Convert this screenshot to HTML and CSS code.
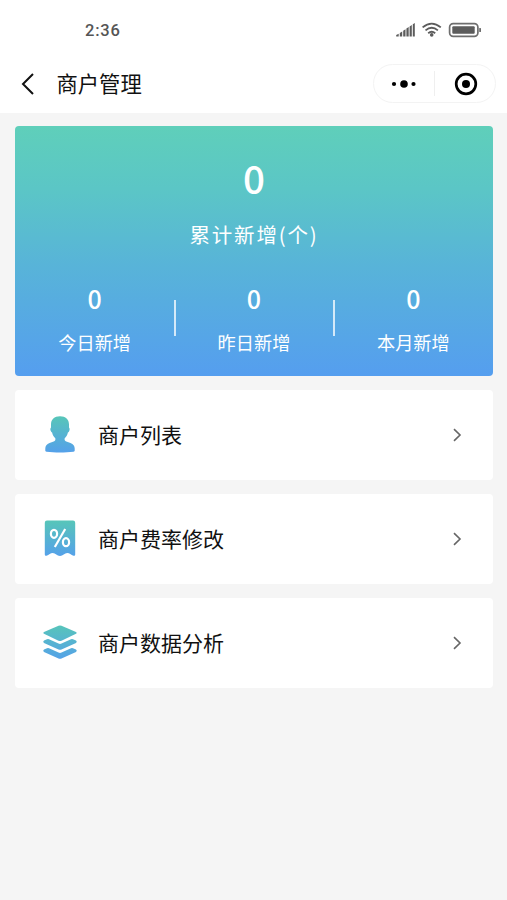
FILE: index.html
```html
<!DOCTYPE html>
<html lang="zh-CN">
<head>
    <meta charset="UTF-8">
    <title>商户管理</title>
    <link rel="stylesheet" href="styles.css">
</head>
<body>
    <header class="header">
        <div class="status-bar">
            <span class="time">2:36</span>
            <svg class="status-icons" width="88" height="16" viewBox="0 0 88 16">
                <g fill="#5c5c5c">
                    <path d="M1.2 14.500v-1.500l2.500-1.200v2.700zM4.800 14.500v-3.500l2.400-1.400v4.900zM8.200 14.500V8.800l2.300-1.500v7.200zM11.400 14.500V6.600l2.300-1.500v9.400zM14.600 14.500V4.400l2.200-1.500v11.600zM17.800 14.500V2.200l2-1.300v13.600z"/>
                    <circle cx="36.7" cy="12.9" r="1.8"/>
                    <rect x="57.3" y="4.3" width="22.4" height="7.4" rx="1"/>
                    <rect x="84.3" y="6" width="1.6" height="4" rx=".6"/>
                </g>
                <path d="M27.6 5.4Q36.7-2.2 45.8 5.4M30.5 8.4Q36.7 3.2 42.9 8.4M33.2 11.2Q36.7 8.2 40.2 11.2" fill="none" stroke="#5c5c5c" stroke-width="1.8"/>
                <rect x="54.6" y="1.6" width="28.3" height="12.8" rx="3.6" fill="none" stroke="#6e6e6e" stroke-width="1.7"/>
            </svg>
        </div>
        <div class="nav-bar">
            <svg class="back" width="14" height="22" viewBox="0 0 14 22">
                <path d="M12 1L2 11l10 10" fill="none" stroke="#111" stroke-width="2"/>
            </svg>
            <h1 class="title">商户管理</h1>
            <div class="capsule">
                <svg width="26" height="10" viewBox="0 0 26 10">
                    <circle cx="3" cy="5" r="2.1"/>
                    <circle cx="13" cy="5" r="3.8"/>
                    <circle cx="22.5" cy="5" r="2.1"/>
                </svg>
                <span class="capsule-line"></span>
                <svg width="24" height="24" viewBox="0 0 24 24">
                    <circle cx="12" cy="12" r="9.8" fill="none" stroke="#000" stroke-width="2.7"/>
                    <circle cx="12" cy="12" r="4"/>
                </svg>
            </div>
        </div>
    </header>

    <main class="content">
        <section class="summary">
            <div class="total">0</div>
            <div class="total-label">累计新增(个)</div>
            <div class="stats">
                <div class="stat">
                    <div class="stat-num">0</div>
                    <div class="stat-label">今日新增</div>
                </div>
                <span class="divider"></span>
                <div class="stat">
                    <div class="stat-num">0</div>
                    <div class="stat-label">昨日新增</div>
                </div>
                <span class="divider"></span>
                <div class="stat">
                    <div class="stat-num">0</div>
                    <div class="stat-label">本月新增</div>
                </div>
            </div>
        </section>

        <a class="item">
            <svg class="item-icon" width="36" height="38" viewBox="0 0 36 38">
                <defs>
                    <linearGradient id="fade" gradientUnits="userSpaceOnUse" x1="0" y1="0" x2="0" y2="38">
                        <stop offset="0" stop-color="#57c6b8"/>
                        <stop offset="1" stop-color="#559fec"/>
                    </linearGradient>
                </defs>
                <path fill="url(#fade)" d="M18 .3C12.300.3 9 3.500 9 8.500v3c-.8.700-.8 2.200-.3 3.300.4 1 .8 1.500 1.400 1.800.5 2.500 1.500 4.400 3.200 5.700.5 1.800-.3 2.900-2.300 3.500L7.500 26.900C4.700 27.900 3.300 29.800 3.300 32.500v2c0 .8.4 1.100 1.200 1.200 8 1 19 1 27 0 .8-.1 1.200-.4 1.200-1.200v-2c0-2.700-1.400-4.600-4.200-5.600l-3.500-1.100c-2-.6-2.800-1.700-2.300-3.500 1.700-1.300 2.700-3.200 3.200-5.700.6-.3 1-.8 1.400-1.800.5-1.100.5-2.600-.3-3.300v-3C27 3.500 23.700.3 18 .3z"/>
            </svg>
            <span class="item-text">商户列表</span>
            <svg class="arrow" width="10" height="14" viewBox="0 0 10 14">
                <path d="M2 1.2L8 7l-6 5.800"/>
            </svg>
        </a>

        <a class="item">
            <svg class="item-icon" width="36" height="38" viewBox="0 0 36 38">
                <path fill="url(#fade)" d="M5 .5h26q2.200 0 2.200 2.200V34.500q0 1.800-1.700 1.200C29 35 27.500 33 25.300 33c-2.800 0-4.300 3-7.300 3s-4.500-3-7.300-3C8.500 33 7 35 4.500 35.700q-1.700.6-1.700-1.200V2.700Q2.800.5 5 .5z"/>
                <g fill="none" stroke="#fff" stroke-width="2.200">
                    <ellipse cx="12" cy="13.800" rx="3.1" ry="4"/>
                    <ellipse cx="24" cy="22.200" rx="3.1" ry="4"/>
                    <path d="M23.200 9L12.800 27"/>
                </g>
            </svg>
            <span class="item-text">商户费率修改</span>
            <svg class="arrow" width="10" height="14" viewBox="0 0 10 14">
                <path d="M2 1.2L8 7l-6 5.800"/>
            </svg>
        </a>

        <a class="item">
            <svg class="item-icon" width="36" height="38" viewBox="0 0 36 38">
                <g fill="url(#fade)">
                    <path d="M16.500 1.800q1.500-.6 3 0L34 7.900q1.600.9 0 1.900l-14.500 6.900q-1.500.7-3 0L2 9.800q-1.600-1 0-1.900z"/>
                    <path d="M2 16.600l3-1.300q1-.4 2 0l9.500 4.300q1.500.7 3 0l9.500-4.300q1-.4 2 0l3 1.300q1.600 1.200 0 2.300l-14.500 6.600q-1.500.7-3 0L2 18.900q-1.600-1.100 0-2.300z"/>
                    <path d="M2 25.600l3-1.300q1-.4 2 0l9.500 4.300q1.500.7 3 0l9.500-4.300q1-.4 2 0l3 1.300q1.600 1.200 0 2.300l-14.500 6.600q-1.500.7-3 0L2 27.900q-1.600-1.100 0-2.300z"/>
                </g>
            </svg>
            <span class="item-text">商户数据分析</span>
            <svg class="arrow" width="10" height="14" viewBox="0 0 10 14">
                <path d="M2 1.2L8 7l-6 5.800"/>
            </svg>
        </a>
    </main>
</body>
</html>
```
FILE: styles.css
```css
* {
    box-sizing: border-box;
}

body {
    margin: 0;
    min-height: 900px;
    background: #f5f5f5;
    color: #111;
    font-family: "Noto Sans CJK SC", sans-serif;
}

svg {
    display: block;
    flex: none;
}

.header {
    height: 113px;
    background: #fff;
}

.status-bar {
    display: flex;
    align-items: center;
    justify-content: space-between;
    height: 60px;
    padding: 0 24px 0 85px;
}

.time {
    font-family: Roboto, sans-serif;
    font-size: 16.5px;
    font-weight: 500;
    letter-spacing: 0.8px;
    color: #555;
}

.nav-bar {
    display: flex;
    align-items: center;
    height: 47px;
    padding: 0 11px 0 21px;
}

.title {
    flex: 1;
    margin: 0 0 1px 21.5px;
    font-size: 21.3px;
    font-weight: 400;
    line-height: 30px;
}

.capsule {
    display: flex;
    align-items: center;
    width: 123px;
    height: 39px;
    padding: 0 17px;
    border: 1px solid #f3f3f3;
    border-radius: 20px;
}

.capsule-line {
    width: 1px;
    height: 25px;
    margin: 0 19px 0 17px;
    background: #efefef;
}

.content {
    padding: 13px 14px 0 15px;
}

.summary {
    height: 250px;
    padding-top: 27px;
    border-radius: 4px;
    background: linear-gradient(#5fcfba, #5bc6c6 25%, #58b4d8 55%, #559eef);
    color: #fff;
    text-align: center;
}

.total {
    height: 48px;
    font-size: 38.5px;
    font-weight: 500;
    line-height: 48px;
}

.total-label {
    height: 30px;
    margin-top: 18px;
    font-size: 20.5px;
    letter-spacing: 1.8px;
    line-height: 30px;
}

.stats {
    display: flex;
    align-items: center;
    margin-top: 32px;
}

.stat {
    flex: 1;
}

.stat-num {
    font-size: 25px;
    font-weight: 500;
    line-height: 34px;
}

.stat-label {
    margin-top: 15px;
    font-size: 18.2px;
    line-height: 24px;
}

.divider {
    width: 2px;
    height: 36px;
    margin: 0 -1.5px 0 -0.5px;
    background: rgba(255, 255, 255, 0.75);
}

.item {
    display: flex;
    align-items: center;
    height: 90px;
    margin-top: 14px;
    padding: 0 31px 0 27px;
    border-radius: 4px;
    background: #fff;
}

.item-text {
    flex: 1;
    margin: 0 0 2px 20px;
    font-size: 21px;
    line-height: 30px;
}

.arrow path {
    fill: none;
    stroke: #666;
    stroke-width: 1.6;
}
```
